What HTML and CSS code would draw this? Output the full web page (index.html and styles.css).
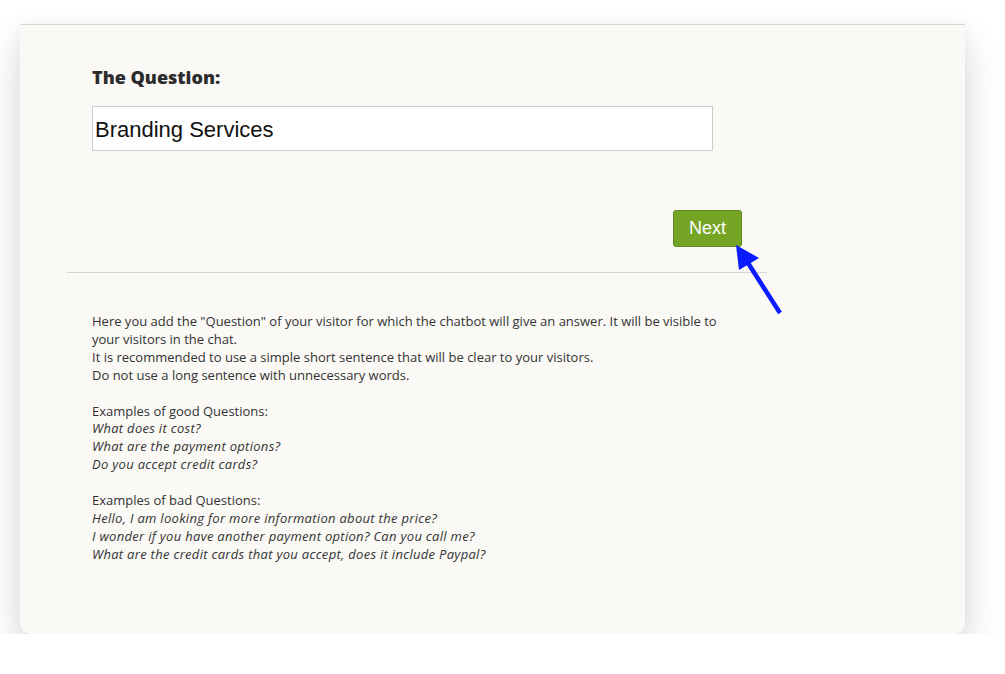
FILE: index.html
```html
<!DOCTYPE html>
<html>
<head>
<meta charset="utf-8">
<link rel="stylesheet" href="styles.css">
</head>
<body>
<div class="panel">
  <div class="top">
    <h2 class="label">The Question:</h2>
    <div class="input">Branding Services</div>
    <div class="actions">
      <button class="next">Next</button>
    </div>
  </div>
  <hr class="divider">
  <div class="help">
    <p>Here you add the "Question" of your visitor for which the chatbot will give an answer. It will be visible to your visitors in the chat.<br>It is recommended to use a simple short sentence that will be clear to your visitors.<br>Do not use a long sentence with unnecessary words.</p>
    <p>Examples of good Questions:<br><em>What does it cost?</em><br><em>What are the payment options?</em><br><em>Do you accept credit cards?</em></p>
    <p>Examples of bad Questions:<br><em>Hello, I am looking for more information about the price?</em><br><em>I wonder if you have another payment option? Can you call me?</em><br><em>What are the credit cards that you accept, does it include Paypal?</em></p>
  </div>
  <svg class="arrow" width="60" height="80" viewBox="0 0 60 80">
    <line x1="52" y1="76" x2="20" y2="26" stroke="#0a1bff" stroke-width="4.5" stroke-linecap="butt"/>
    <polygon points="8,8 11,33 31,21" fill="#0a1bff"/>
  </svg>
</div>
</body>
</html>
```
FILE: styles.css
```css
html, body {
  margin: 0;
  padding: 0;
  background: #ffffff;
}
.panel {
  position: relative;
  box-sizing: border-box;
  margin: 24px 0 0 20px;
  width: 945px;
  height: 610px;
  background: #faf9f6;
  border-top: 1px solid #d6d6d6;
  border-radius: 0 0 10px 10px;
  box-shadow: 0 20px 40px rgba(0, 0, 0, 0.14), 0 4px 20px rgba(0, 0, 0, 0.06);
}
.top {
  padding: 40px 0 0 72px;
  width: 650px;
}
.label {
  margin: 0;
  font-family: "Open Sans", sans-serif;
  font-weight: 800;
  font-size: 18px;
  line-height: 25px;
  color: #2b2b2b;
}
.input {
  box-sizing: border-box;
  margin-top: 16px;
  width: 621px;
  height: 45px;
  background: #ffffff;
  border: 1px solid #cccccc;
  padding: 2px 2px 0;
  font-family: "Liberation Sans", Arial, sans-serif;
  font-size: 22px;
  line-height: 42px;
  color: #111;
}
.actions {
  display: flex;
  justify-content: flex-end;
  margin-top: 59px;
}
.next {
  box-sizing: border-box;
  width: 69px;
  height: 37px;
  background: #76a526;
  border: 1px solid #5e8a1b;
  border-radius: 3px;
  color: #ffffff;
  font-family: "Liberation Sans", Arial, sans-serif;
  font-size: 18px;
  padding: 0;
  line-height: 35px;
}
.divider {
  margin: 25px 0 0 47px;
  width: 700px;
  border: 0;
  border-top: 1px solid #d4d4d4;
  height: 0;
}
.help {
  padding: 40px 0 0 72px;
  width: 640px;
  font-family: "Open Sans", sans-serif;
  font-size: 13px;
  line-height: 17.9px;
  color: #333333;
}
.help p {
  margin: 0 0 17.9px 0;
}
.help em {
  font-style: italic;
  letter-spacing: 0.3px;
}
.arrow {
  position: absolute;
  left: 708px;
  top: 212px;
}
```
